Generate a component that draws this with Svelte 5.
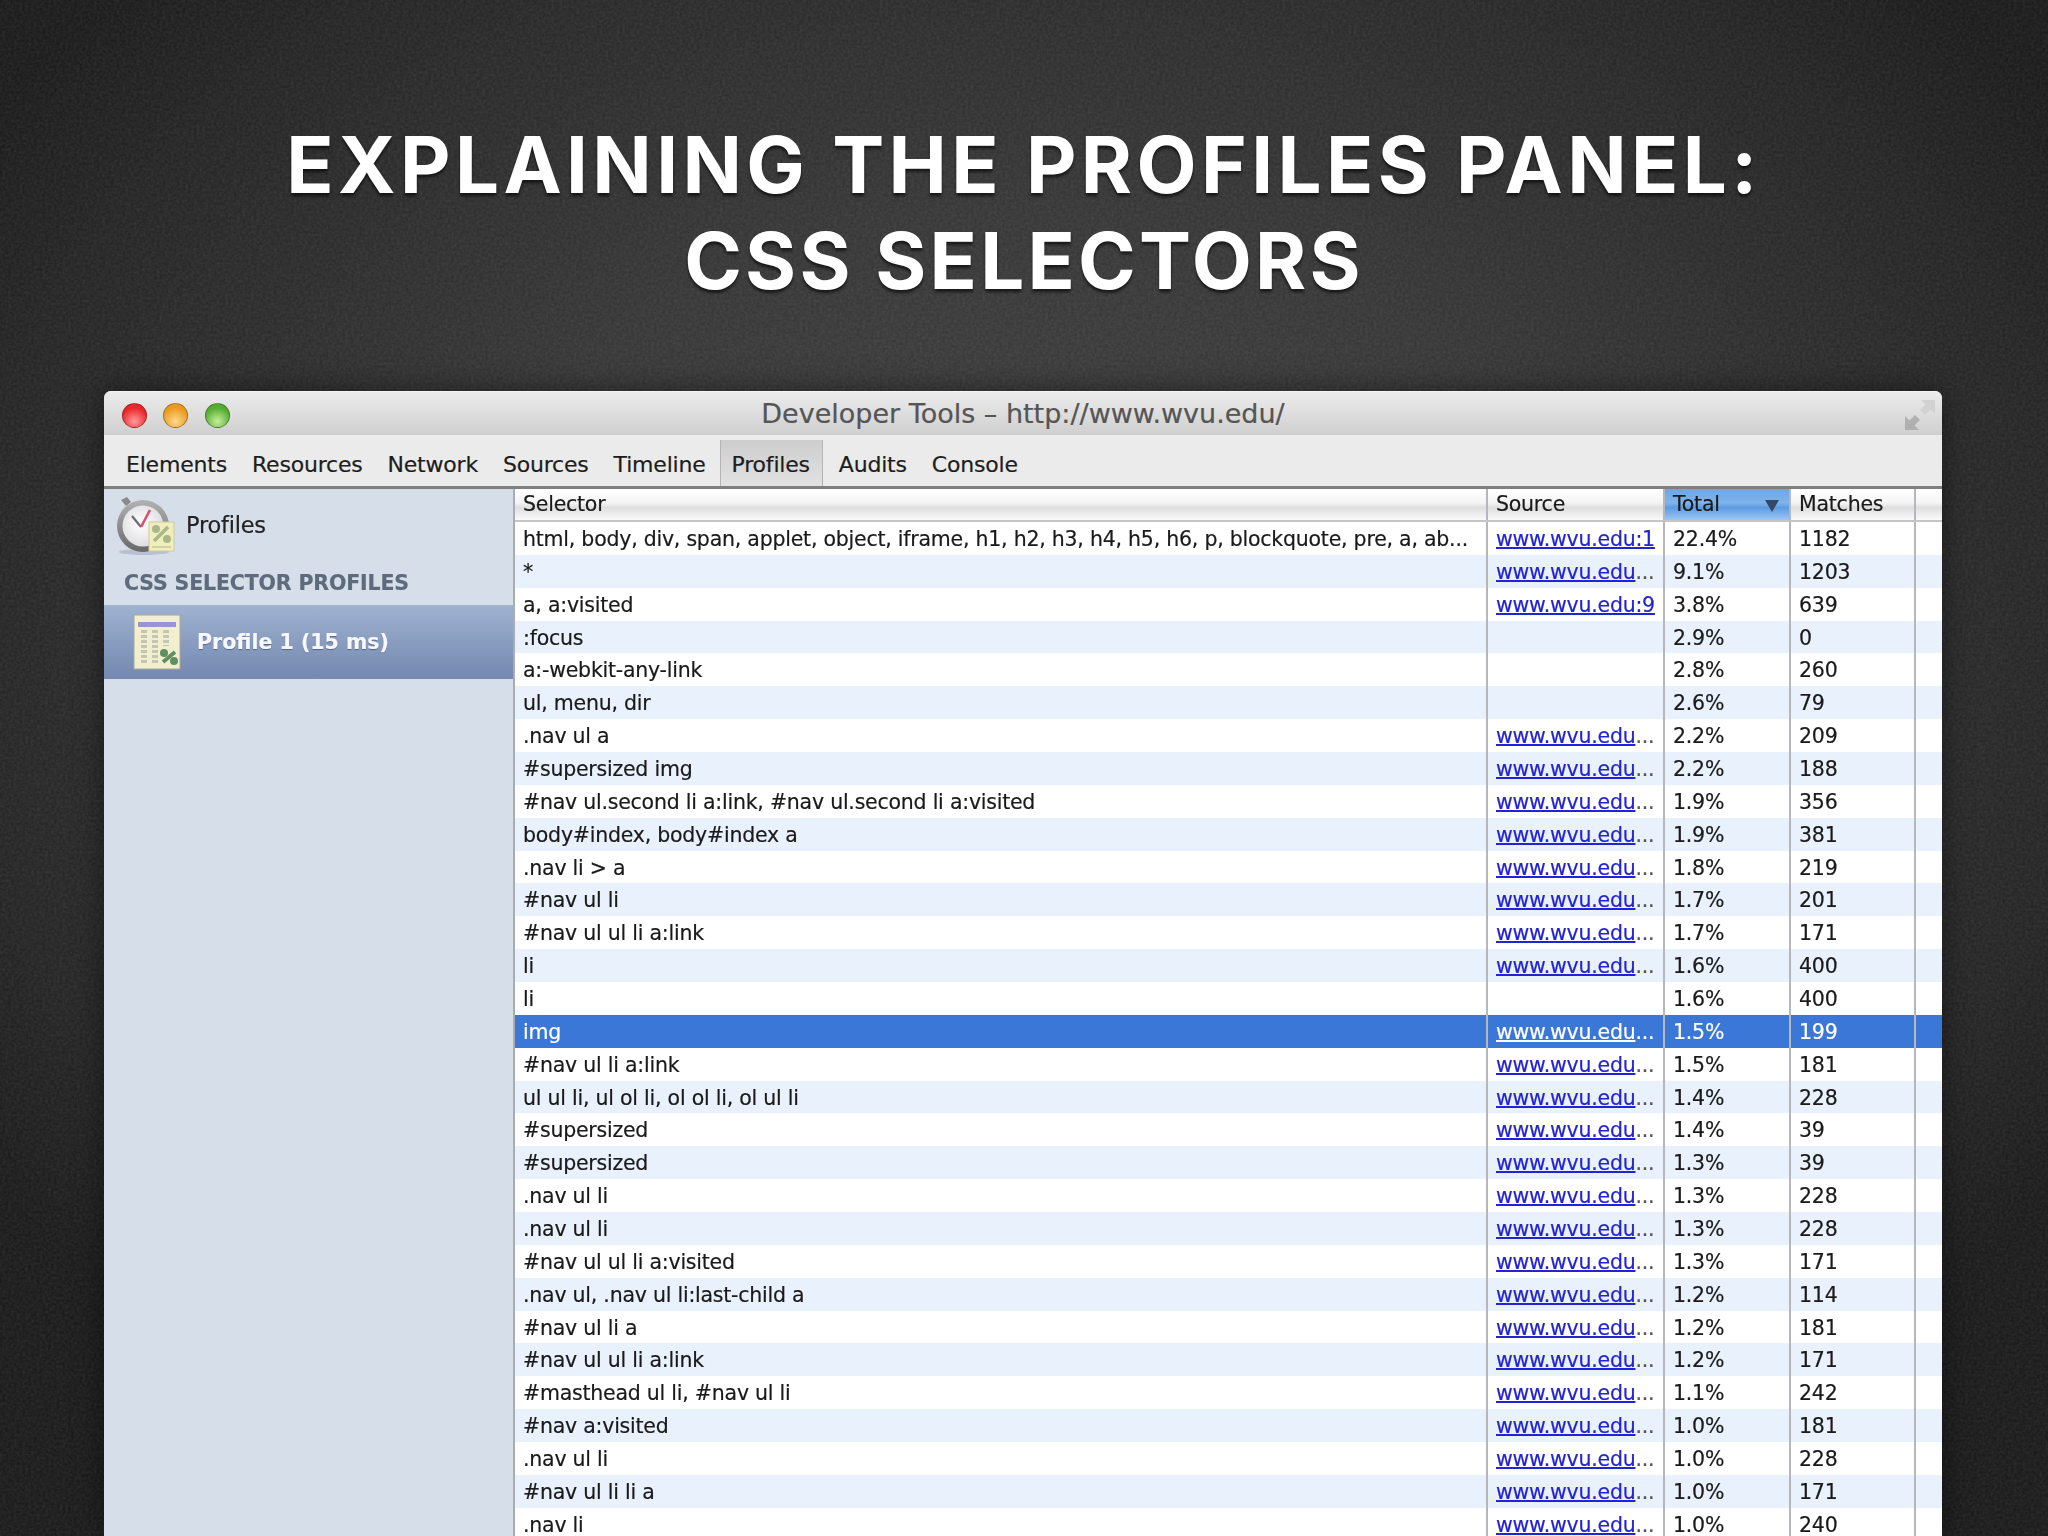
<script>
	const tabs = ['Elements', 'Resources', 'Network', 'Sources', 'Timeline', 'Profiles', 'Audits', 'Console'];

	// selector, source ('' = no link, no line number = truncated), total, matches
	const rows = [
		['html, body, div, span, applet, object, iframe, h1, h2, h3, h4, h5, h6, p, blockquote, pre, a, ab...', 'www.wvu.edu:1', '22.4%', '1182'],
		['*', 'www.wvu.edu', '9.1%', '1203'],
		['a, a:visited', 'www.wvu.edu:9', '3.8%', '639'],
		[':focus', '', '2.9%', '0'],
		['a:-webkit-any-link', '', '2.8%', '260'],
		['ul, menu, dir', '', '2.6%', '79'],
		['.nav ul a', 'www.wvu.edu', '2.2%', '209'],
		['#supersized img', 'www.wvu.edu', '2.2%', '188'],
		['#nav ul.second li a:link, #nav ul.second li a:visited', 'www.wvu.edu', '1.9%', '356'],
		['body#index, body#index a', 'www.wvu.edu', '1.9%', '381'],
		['.nav li > a', 'www.wvu.edu', '1.8%', '219'],
		['#nav ul li', 'www.wvu.edu', '1.7%', '201'],
		['#nav ul ul li a:link', 'www.wvu.edu', '1.7%', '171'],
		['li', 'www.wvu.edu', '1.6%', '400'],
		['li', '', '1.6%', '400'],
		['img', 'www.wvu.edu', '1.5%', '199'],
		['#nav ul li a:link', 'www.wvu.edu', '1.5%', '181'],
		['ul ul li, ul ol li, ol ol li, ol ul li', 'www.wvu.edu', '1.4%', '228'],
		['#supersized', 'www.wvu.edu', '1.4%', '39'],
		['#supersized', 'www.wvu.edu', '1.3%', '39'],
		['.nav ul li', 'www.wvu.edu', '1.3%', '228'],
		['.nav ul li', 'www.wvu.edu', '1.3%', '228'],
		['#nav ul ul li a:visited', 'www.wvu.edu', '1.3%', '171'],
		['.nav ul, .nav ul li:last-child a', 'www.wvu.edu', '1.2%', '114'],
		['#nav ul li a', 'www.wvu.edu', '1.2%', '181'],
		['#nav ul ul li a:link', 'www.wvu.edu', '1.2%', '171'],
		['#masthead ul li, #nav ul li', 'www.wvu.edu', '1.1%', '242'],
		['#nav a:visited', 'www.wvu.edu', '1.0%', '181'],
		['.nav ul li', 'www.wvu.edu', '1.0%', '228'],
		['#nav ul li li a', 'www.wvu.edu', '1.0%', '171'],
		['.nav li', 'www.wvu.edu', '1.0%', '240']
	];
</script>

<div class="slide">
	<svg class="grain" width="2048" height="1536" aria-hidden="true">
		<filter id="grain-f">
			<feTurbulence type="fractalNoise" baseFrequency="0.35" numOctaves="3" seed="4" />
			<feColorMatrix values="0 0 0 0 1  0 0 0 0 1  0 0 0 0 1  0 0 0 0.5 -0.12" />
		</filter>
		<rect width="2048" height="1536" filter="url(#grain-f)" opacity="0.22" />
	</svg>

	<h1>EXPLAINING THE PROFILES PANEL:<br /><span>CSS SELECTORS</span></h1>

	<div class="window">
		<div class="titlebar">
			<div class="lights">
				<span class="light red"></span>
				<span class="light amber"></span>
				<span class="light green"></span>
			</div>
			<span class="title">Developer Tools – http://www.wvu.edu/</span>
			<svg class="expand" width="32" height="32" viewBox="0 0 32 32">
				<path d="M31 1H17l4.5 4.5-5.5 5.5 5 5 5.5-5.5L31 15z" fill="#d2d2d2" />
				<path d="M1 31h14l-4.5-4.5 5.5-5.5-5-5-5.5 5.5L1 17z" fill="#b0b0b0" />
			</svg>
		</div>

		<div class="toolbar">
			{#each tabs as tab}
				<span class="tab" class:active={tab === 'Profiles'}>{tab}</span>
			{/each}
		</div>

		<div class="body">
			<aside class="sidebar">
				<div class="side-head">
					<svg width="62" height="62" viewBox="0 0 62 62">
						<defs>
							<radialGradient id="face" cx="0.45" cy="0.45" r="0.6">
								<stop offset="0" stop-color="#ffffff" />
								<stop offset="1" stop-color="#dcdce0" />
							</radialGradient>
							<linearGradient id="rim" x1="0" y1="0" x2="0" y2="1">
								<stop offset="0" stop-color="#b2b2b2" />
								<stop offset="1" stop-color="#686868" />
							</linearGradient>
						</defs>
						<ellipse cx="30" cy="58" rx="25" ry="3" fill="#9aa3af" opacity="0.5" />
						<path d="M7 6l6-3 4 5-5 4z" fill="#8a8a8a" />
						<circle cx="29" cy="32" r="26" fill="url(#rim)" />
						<circle cx="29" cy="32" r="20.5" fill="url(#face)" />
						<path d="M18 22l9 11" fill="none" stroke="#6b6b6b" stroke-width="2.2" />
						<path d="M27 33l9-17" fill="none" stroke="#d9506a" stroke-width="2.6" />
						<rect x="35" y="28" width="25" height="29" fill="#f1eebb" stroke="#cfcc9e" />
						<circle cx="42" cy="35" r="4" fill="#a9b88a" />
						<circle cx="53" cy="45" r="4" fill="#a9b88a" />
						<path d="M40 47l14-14" stroke="#a9b88a" stroke-width="3.5" />
						<path d="M38 53h19" stroke="#c9c69a" stroke-width="1.5" />
					</svg>
					<span>Profiles</span>
				</div>
				<div class="side-group">CSS SELECTOR PROFILES</div>
				<div class="side-item">
					<svg width="48" height="56" viewBox="0 0 48 56">
						<rect x="1" y="1" width="46" height="54" fill="#f1efd0" stroke="#a9a995" />
						<rect x="5" y="8" width="38" height="5" fill="#9a94cf" />
						<path d="M11 16v34M22 16v34M33 16v16" stroke="#c4c6b0" stroke-width="6" stroke-dasharray="3 2" />
						<circle cx="31" cy="39" r="4" fill="#5f8f62" />
						<circle cx="41" cy="47" r="4" fill="#5f8f62" />
						<path d="M30 48l12-10" stroke="#5f8f62" stroke-width="4" />
					</svg>
					<span>Profile 1 (15 ms)</span>
				</div>
			</aside>

			<div class="grid">
				<div class="row head">
					<div class="cell sel">Selector</div>
					<div class="cell src">Source</div>
					<div class="cell tot sorted">Total<i class="arrow"></i></div>
					<div class="cell mat">Matches</div>
					<div class="cell end"></div>
				</div>
				{#each rows as row, i}
					<div class="row" class:alt={i % 2 === 1} class:selected={row[0] === 'img'}>
						<div class="cell sel">{row[0]}</div>
						<div class="cell src">
							{#if row[1]}
								<u>{row[1]}</u>{#if !row[1].includes(':')}<span class="more">...</span>{/if}
							{/if}
						</div>
						<div class="cell tot">{row[2]}</div>
						<div class="cell mat">{row[3]}</div>
						<div class="cell end"></div>
					</div>
				{/each}
			</div>
		</div>
	</div>
</div>

<style>
	:global(body) {
		margin: 0;
		background: #222;
	}

	.slide {
		position: relative;
		width: 2048px;
		height: 1536px;
		overflow: hidden;
		background:
			radial-gradient(ellipse 1250px 950px at 50% 42%, #414141 0%, #383838 45%, #262626 85%, #1c1c1c 100%);
	}

	.grain {
		position: absolute;
		inset: 0;
	}

	h1 {
		position: relative;
		margin: 0;
		padding-top: 117px;
		height: 391px;
		box-sizing: border-box;
		text-align: center;
		font: 700 78px/96px Inter, "Liberation Sans", sans-serif;
		letter-spacing: 4.4px;
		color: #fff;
		text-shadow: 0 3px 3px rgba(0, 0, 0, 0.6);
	}

	h1 span {
		letter-spacing: 3.2px;
	}

	.window {
		position: relative;
		margin-left: 104px;
		width: 1838px;
		height: 1145px;
		border-radius: 7px 7px 0 0;
		overflow: hidden;
		background: #d6deea;
		font-family: "DejaVu Sans", sans-serif;
		font-size: 20.5px;
		letter-spacing: -0.23px;
		color: #1a1a1a;
		-webkit-text-stroke: 0.2px;
		filter: blur(0.6px);
		box-shadow: 0 0 30px rgba(0, 0, 0, 0.5);
	}

	.titlebar {
		display: flex;
		align-items: center;
		justify-content: center;
		position: relative;
		height: 44px;
		background: linear-gradient(#ececec, #cfcfcf);
		border-top: 1px solid #f4f4f4;
		box-sizing: border-box;
		color: #555;
		font-size: 27px;
		letter-spacing: 0;
	}

	.lights {
		position: absolute;
		left: 17.5px;
		top: 11px;
		display: flex;
		gap: 16.5px;
	}

	.light {
		width: 25px;
		height: 25px;
		border-radius: 50%;
		box-sizing: border-box;
		border: 1px solid rgba(0, 0, 0, 0.3);
	}

	.red { background: radial-gradient(circle at 50% 75%, #ff9a9a, #e8272c 65%); }
	.amber { background: radial-gradient(circle at 50% 75%, #ffd98a, #ea9a20 65%); }
	.green { background: radial-gradient(circle at 50% 75%, #c6f09a, #56ac33 65%); }

	.expand {
		position: absolute;
		right: 6px;
		top: 7px;
	}

	.toolbar {
		display: flex;
		height: 54px;
		padding-left: 11px;
		box-sizing: border-box;
		background: #ebebeb;
		border-bottom: 3px solid #7f7f7f;
		font-size: 22px;
		letter-spacing: -0.2px;
	}

	.tab {
		display: flex;
		align-items: center;
		padding: 7px 11px 0;
		margin-right: 3px;
		color: #1d1d1d;
	}

	.tab.active {
		margin-top: 5px;
		padding: 2px 12px 0 11px;
		margin-right: 5px;
		background: linear-gradient(#cdcdcd, #e2e2e2);
		border-left: 1px solid #b5b5b5;
		border-right: 1px solid #b5b5b5;
	}

	.body {
		display: flex;
		height: 1300px;
	}

	.sidebar {
		width: 409px;
		flex: none;
		background: #d6deea;
		border-right: 2px solid #a9adb2;
	}

	.side-head {
		display: flex;
		align-items: center;
		gap: 10px;
		height: 72px;
		padding-left: 10px;
		font-size: 22.5px;
		color: #222;
	}

	.side-group {
		height: 44px;
		padding-left: 20px;
		display: flex;
		align-items: center;
		font-weight: 700;
		font-size: 20.5px;
		letter-spacing: -0.15px;
		color: #5d6b7c;
	}

	.side-item {
		display: flex;
		align-items: center;
		gap: 16px;
		height: 74px;
		padding-left: 29px;
		background: linear-gradient(#9fb2d0, #7488b0);
		color: #f6f8fc;
		font-weight: 700;
		font-size: 20.5px;
		letter-spacing: 0;
		text-shadow: 0 1px 1px rgba(0, 0, 0, 0.35);
	}

	.grid {
		flex: 1;
		min-width: 0;
		background: #fff;
	}

	.row {
		display: flex;
		height: 32.87px;
		line-height: 33px;
		background: #fff;
	}

	.row.alt {
		background: #e8f1fc;
	}

	.row.selected {
		background: #3a77d6;
		color: #fff;
	}

	.row.head {
		height: 33px;
		line-height: 31px;
		background: linear-gradient(#fff 0%, #f4f4f4 45%, #dedede 60%, #fafafa 100%);
		border-bottom: 2px solid #c5c5c5;
		box-sizing: border-box;
	}

	.cell {
		box-sizing: border-box;
		height: 100%;
		white-space: nowrap;
		overflow: hidden;
		padding: 1px 0 0 8px;
		border-right: 2px solid #b4b8bd;
	}

	.head .cell {
		padding-top: 0;
	}

	.sel { width: 973px; }
	.src { width: 177px; }
	.tot { width: 126px; }
	.mat { width: 125px; }
	.end { flex: 1; border-right: none; }

	.src u {
		color: #2323d6;
		text-decoration-thickness: 2px;
	}

	.selected .src u {
		color: #fff;
	}

	.more {
		color: #555;
	}

	.selected .more {
		color: #fff;
	}

	.sorted {
		position: relative;
		background: linear-gradient(#6fa6e2 0%, #7fb4ec 45%, #5d9be0 60%, #9cc8f4 100%);
	}

	.arrow {
		position: absolute;
		right: 10px;
		top: 11px;
		border: 7px solid transparent;
		border-top: 12px solid #33496a;
		border-bottom: none;
	}
</style>
